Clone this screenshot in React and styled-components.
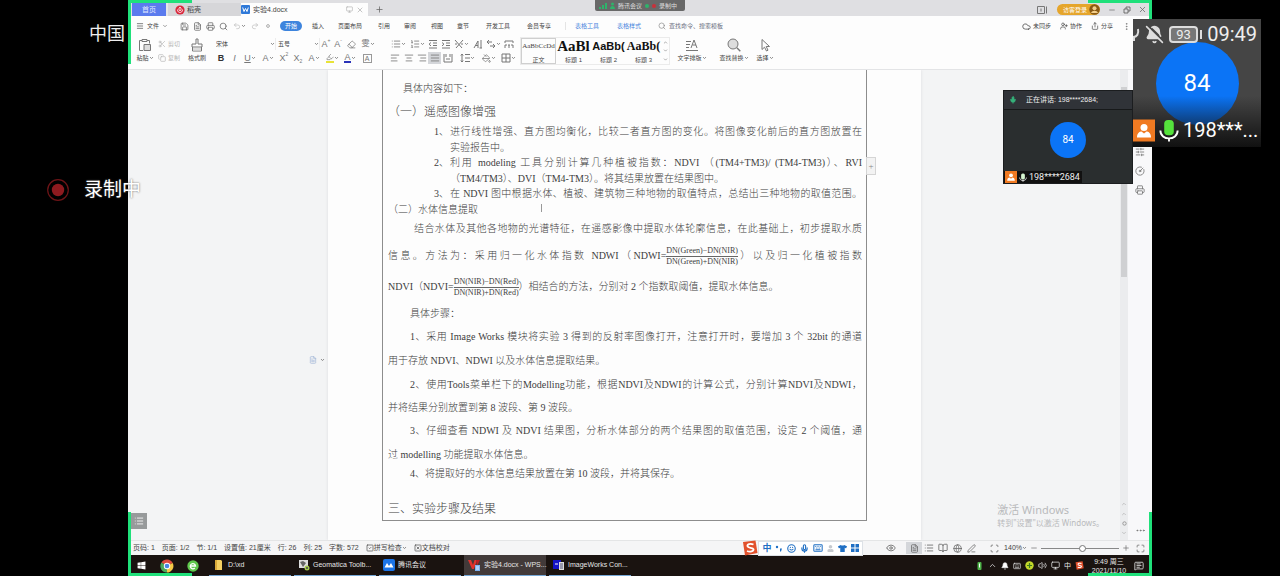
import { useState } from "react";
import styled, { createGlobalStyle, css } from "styled-components";
import {
  AlignCenter,
  AlignJustify,
  AlignLeft,
  AlignRight,
  Bell,
  BellOff,
  BookOpen,
  ChevronDown,
  ChevronUp,
  CircleGauge,
  Cloud,
  Copy,
  Ellipsis,
  EllipsisVertical,
  Eraser,
  Eye,
  FileText,
  Globe,
  Highlighter,
  Keyboard,
  List,
  ListOrdered,
  Maximize,
  Menu,
  MessageSquareText,
  Mic,
  Minus,
  Monitor,
  PaintBucket,
  PenLine,
  Plus,
  Printer,
  Redo2,
  Save,
  Scan,
  Scissors,
  Search,
  Share,
  SlidersHorizontal,
  Smile,
  SquareCheck,
  SquareX,
  Undo2,
  UserPlus,
  Volume2,
  X,
} from "lucide-react";
import { FaUser, FaTshirt, FaWindows } from "react-icons/fa";

const FILE_TOOLS = [
  { id: "save", icon: Save },
  { id: "export", icon: FileText },
  { id: "print", icon: Printer },
  { id: "preview", icon: Search },
];

const MENUS = [
  { text: "插入", w: 20 },
  { text: "页面布局", w: 44 },
  { text: "引用", w: 24 },
  { text: "审阅", w: 28 },
  { text: "视图", w: 26 },
  { text: "章节", w: 26 },
  { text: "开发工具", w: 44 },
  { text: "会员专享", w: 38 },
];

const STYLES = [
  { sample: "AaBbCcDd", name: "正文", size: 7, on: true },
  { sample: "AaBl", name: "标题 1", size: 15, bold: true },
  { sample: "AaBb(", name: "标题 2", size: 11, bold: true, sans: true },
  { sample: "AaBb(", name: "标题 3", size: 12, bold: true },
];

const TASKS = [
  { text: "D:\\xd", icon: "folder" },
  { text: "Geomatica Toolb...", icon: "geo" },
  { text: "腾讯会议", icon: "meeting" },
  { text: "实验4.docx - WPS...", icon: "wps", on: true },
  { text: "ImageWorks Con...", icon: "image" },
];

const Caret = () => (
  <svg width="5" height="4" viewBox="0 0 5 4">
    <path d="M1 1l1.5 1.6L4 1" fill="none" stroke="#777" strokeWidth="0.8" />
  </svg>
);

const PasteIcon = () => (
  <svg width="14" height="14" viewBox="0 0 14 14" fill="none" stroke="#777">
    <path d="M4 2.5H1.5v10H5M9 2.5h2.500v3M4 1.500h5v2H4z" />
    <path d="M6 6.500h6.500v6H6z" fill="#ddd" />
  </svg>
);

const BrushIcon = () => (
  <svg width="14" height="14" viewBox="0 0 14 14" fill="none" stroke="#777">
    <path d="M6 1h2v5h4v3H2V6h4zM2.500 9v4h9V9" />
    <path d="M3 10h8v2.500H3z" fill="#ddd" stroke="none" />
  </svg>
);

const TypesetIcon = () => (
  <svg width="14" height="14" viewBox="0 0 14 14" fill="none" stroke="#777">
    <path d="M1 3.500h5M1 6.500h4M1 9.500h3M1 12.500h12M6 10l3-8 3 8M7.500 7h3.500" />
  </svg>
);

const CursorIcon = () => (
  <svg width="14" height="14" viewBox="0 0 14 14" fill="none" stroke="#777">
    <path d="M4 1.500v10l2.500-2.300 2 3.800 1.500-.8-1.800-3.700h3.300z" />
  </svg>
);

const FindIcon = () => (
  <svg width="14" height="14" viewBox="0 0 14 14" fill="#ddd" stroke="#777">
    <circle cx="6" cy="6" r="5" />
    <path d="M9.800 9.800l3.500 3.500" strokeWidth="1.400" />
  </svg>
);

const IndentIcon = ({ flip }) => (
  <svg width="10" height="10" viewBox="0 0 10 10" fill="none" stroke="#777">
    <path d="M1 1.500h8M5 4h4M5 6.500h4M1 9h8" />
    <path d={flip ? "M1 3.500l2 1.700-2 1.700" : "M3 3.500L1 5.200l2 1.700"} />
  </svg>
);

const AsianIcon = () => (
  <svg width="10" height="10" viewBox="0 0 10 10" fill="none" stroke="#777">
    <path d="M1 1l7 8M9 1L2 9M1 5h2M7 5h2" />
  </svg>
);

const SortIcon = () => (
  <svg width="10" height="10" viewBox="0 0 10 10" fill="none" stroke="#777">
    <path d="M1 9l4-7v7M2.500 6.500H5M8 1v8M6.500 9H9" />
  </svg>
);

const WrapIcon = () => (
  <svg width="10" height="10" viewBox="0 0 10 10" fill="none" stroke="#777">
    <path d="M1 3h5M3 1L1 3l2 2M4 7h5M7 5l2 2-2 2" />
  </svg>
);

const RulerIcon = () => (
  <svg width="10" height="10" viewBox="0 0 10 10" fill="none" stroke="#777">
    <path d="M1 2h8M1 2v2M9 2v2M1 6h2M4 6h2M7 6h2M1 9V6M5 9V6M9 9V6" />
  </svg>
);

const SpreadIcon = () => (
  <svg width="10" height="10" viewBox="0 0 10 10" fill="none" stroke="#777">
    <path d="M1 1v8h8V1M3 1v3M7 1v3M3 6h4" />
  </svg>
);

const SpacingIcon = () => (
  <svg width="10" height="10" viewBox="0 0 10 10" fill="none" stroke="#777">
    <path d="M2 1v8M.8 2.500L2 1l1.200 1.500M.8 7.500L2 9l1.200-1.500M5 1.500h5M5 5h5M5 8.500h5" />
  </svg>
);

const TableIcon = () => (
  <svg width="10" height="10" viewBox="0 0 10 10" fill="none" stroke="#777">
    <path d="M1 1h8v8H1zM5 1v8M1 5h8" />
  </svg>
);

const RestoreIcon = () => (
  <svg width="8" height="8" viewBox="0 0 8 8" fill="none" stroke="#555" strokeWidth="0.8">
    <path d="M1 3h4v4H1zM3 3V1h4v4H5" />
  </svg>
);

const SogouIcon = ({ size }) => (
  <svg width={size} height={size} viewBox="0 0 16 16">
    <path d="M1 2l12.500-1.500 2 12.500L3 15.500z" fill="#e2512c" />
    <path d="M11.500 4.500C8 3 5 4.300 5.500 6.300c.5 2 5.500 1 6 3 .4 2-3.500 3-6.500 1.700" fill="none" stroke="#fff" strokeWidth="1.800" />
  </svg>
);

const DocIcon = () => (
  <svg width="9" height="9" viewBox="0 0 9 9">
    <rect width="9" height="9" rx="1" fill="#2f79d8" />
    <path d="M1.700 2.500L3 6.500l1.500-3 1.500 3 1.300-4" fill="none" stroke="#fff" />
  </svg>
);

const ShellIcon = () => (
  <svg width="10" height="10" viewBox="0 0 10 10">
    <circle cx="5" cy="5" r="4.600" fill="#d9283c" />
    <path d="M5 2c1.500 1.500 1.500 2.500 0 4C3.500 4.500 3.500 3.500 5 2zM2.500 4.500C2.500 7 4 7.500 5 7.500s2.500-.5 2.500-3" fill="none" stroke="#fff" strokeWidth="0.800" />
  </svg>
);

const ChromeIcon = () => (
  <svg width="14" height="14" viewBox="0 0 14 14">
    <path d="M7 7L1.400 3.500A6.500 6.500 0 0 1 12.700 4z" fill="#dd4b3e" />
    <path d="M7 7l5.700-3A6.500 6.500 0 0 1 7 13.500z" fill="#f6c945" />
    <path d="M7 7v6.500A6.500 6.500 0 0 1 1.400 3.500z" fill="#4ba85a" />
    <circle cx="7" cy="7" r="3.200" fill="#fff" />
    <circle cx="7" cy="7" r="2.300" fill="#4a86e0" />
  </svg>
);

const GreenBrowserIcon = () => (
  <svg width="12" height="12" viewBox="0 0 12 12">
    <circle cx="6" cy="6" r="5.700" fill="#5fc84c" />
    <path d="M3.500 6h5A2.600 2.600 0 1 0 7.800 8" fill="none" stroke="#fff" strokeWidth="1.300" />
  </svg>
);

const TaskIcon = ({ kind }) => {
  if (kind === "folder") {
    return (
      <svg width="12" height="12" viewBox="0 0 12 12">
        <path d="M2 1h6l1 1v9H2z" fill="#f4cf62" />
        <path d="M2 1h2v10H2z" fill="#d9a93a" />
      </svg>
    );
  }
  if (kind === "geo") {
    return (
      <svg width="12" height="12" viewBox="0 0 12 12">
        <path d="M1 1h9v8H1z" fill="#ddd" />
        <path d="M2 3l3-1 3 2-3 4z" fill="#666" />
        <circle cx="9" cy="9" r="2.500" fill="#a4c84c" />
        <circle cx="9" cy="9" r="1" fill="#445" />
      </svg>
    );
  }
  if (kind === "meeting") {
    return (
      <svg width="12" height="12" viewBox="0 0 12 12">
        <rect width="12" height="12" rx="2" fill="#1b74e8" />
        <path d="M1.500 8.500L4 4l2 3 2-3 2.500 4.500z" fill="#fff" />
      </svg>
    );
  }
  if (kind === "wps") {
    return (
      <svg width="13" height="12" viewBox="0 0 13 12">
        <path d="M0 1h3l2 5 1.500-5H9l-3 9H4z" fill="#e0322d" />
        <path d="M8 1h4L9 7z" fill="#b81f24" />
        <path d="M7 6h5v6H7z" fill="#7db2f2" />
        <path d="M8 8h3M8 10h3" stroke="#fff" strokeWidth="0.800" />
      </svg>
    );
  }
  return (
    <svg width="12" height="12" viewBox="0 0 12 12">
      <path d="M0 1h8v9H0z" fill="#1414c8" />
      <path d="M2 5h3" stroke="#fff" />
      <path d="M6 3h5v8H6z" fill="#ddd" />
      <path d="M7 5h3M7 7h3M7 9h3" stroke="#336" strokeWidth="0.800" />
    </svg>
  );
};

const TitleBar = () => (
  <Tabs>
    <Tab $w={34} $kind="home">首页</Tab>
    <Tab $w={75} $kind="idle">
      <ShellIcon />
      稻壳
    </Tab>
    <Tab $w={127} $kind="open">
      <DocIcon />
      <span>实验4.docx</span>
      <Monitor size={7} color="#aaa" />
      <X size={8} color="#aaa" />
    </Tab>
    <IconButton $w={22} aria-label="new tab">
      <Plus size={9} />
    </IconButton>
    <WindowTools>
      <svg width="11" height="8" viewBox="0 0 11 8" fill="none" stroke="#777">
        <path d="M.5.500h7v7h-7zM9.500.500v7M4 2.500v3" />
      </svg>
      <Guest>
        访客登录
        <svg width="11" height="11" viewBox="0 0 11 11">
          <circle cx="5.500" cy="5.500" r="5.200" fill="#8a5a14" />
          <circle cx="5.500" cy="4.300" r="2" fill="#f4cf8a" />
          <path d="M2 9c1-3 6-3 7 0" fill="#f4cf8a" />
        </svg>
      </Guest>
      <IconButton $w={14} aria-label="minimize">
        <Minus size={8} />
      </IconButton>
      <IconButton $w={14} aria-label="restore">
        <RestoreIcon />
      </IconButton>
      <IconButton $w={14} aria-label="close">
        <X size={9} />
      </IconButton>
    </WindowTools>
  </Tabs>
);

const MenuBar = () => (
  <MenuRow>
    <FileButton>
      <Menu size={8} />
      文件
      <ChevronDown size={6} />
    </FileButton>
    {FILE_TOOLS.map(({ id, icon: Icon }) => (
      <IconButton key={id} $w={13} aria-label={id}>
        <Icon size={9} strokeWidth={2} />
      </IconButton>
    ))}
    <IconButton $w={18} $dim aria-label="undo">
      <Undo2 size={8} />
      <Caret />
    </IconButton>
    <IconButton $w={14} $dim aria-label="redo">
      <Redo2 size={8} />
    </IconButton>
    <IconButton $w={12} $dim aria-label="more">
      <svg width="4" height="4" viewBox="0 0 4 4">
        <circle cx="2" cy="2" r="1.400" fill="none" stroke="#999" strokeWidth="0.800" />
      </svg>
    </IconButton>
    <MenuItem $w={34} $on>
      <span>开始</span>
    </MenuItem>
    {MENUS.map((menu) => (
      <MenuItem key={menu.text} $w={menu.w}>
        {menu.text}
      </MenuItem>
    ))}
    <Divider />
    <MenuItem $w={30} $link>表格工具</MenuItem>
    <MenuItem $w={54} $link>表格样式</MenuItem>
    <SearchBox>
      <Search size={8} color="#888" />
      <input type="text" name="command" aria-label="search" placeholder="查找命令、搜索模板" />
    </SearchBox>
    <ShareTools>
      <button>
        <Cloud size={9} />
        未同步
      </button>
      <button>
        <UserPlus size={8} />
        协作
      </button>
      <button>
        <Share size={8} />
        分享
      </button>
      <EllipsisVertical size={9} color="#777" />
    </ShareTools>
  </MenuRow>
);

const Ribbon = () => (
  <RibbonRow>
    <BigTool $w={26}>
      <PasteIcon />
      <span>
        粘贴
        <Caret />
      </span>
    </BigTool>
    <SmallTools>
      <button>
        <Scissors size={8} />
        剪切
      </button>
      <button>
        <Copy size={8} />
        复制
      </button>
    </SmallTools>
    <BigTool $w={26}>
      <BrushIcon />
      <span>格式刷</span>
    </BigTool>
    <ToolGroup $w={170}>
      <div>
        <Picker $w={62}>
          <select aria-label="font">
            <option>宋体</option>
          </select>
          <Caret />
        </Picker>
        <Picker $w={44}>
          <select aria-label="size">
            <option>五号</option>
          </select>
          <Caret />
        </Picker>
        <Tool $w={12}>A<sup>+</sup></Tool>
        <Tool $w={12}>A<sup>-</sup></Tool>
        <Tool $w={14} aria-label="clear"><Eraser size={9} /></Tool>
        <Tool $w={20}>
          <small>雯</small>
          <Caret />
        </Tool>
      </div>
      <div>
        <Tool $w={14} $strong>B</Tool>
        <Tool $w={13}><i>I</i></Tool>
        <Tool $w={18}><u>U</u><Caret /></Tool>
        <Tool $w={18}>A<Caret /></Tool>
        <Tool $w={14}>X<sup>2</sup></Tool>
        <Tool $w={14}>X<sub>2</sub></Tool>
        <Tool $w={18}>A<Caret /></Tool>
        <Tool $w={18} $under="#e8e337" aria-label="highlight">
          <b><Highlighter size={8} /></b>
          <Caret />
        </Tool>
        <Tool $w={18} $under="#2a33b8"><b>A</b><Caret /></Tool>
        <Tool $w={16}><em>A</em></Tool>
      </div>
    </ToolGroup>
    <ToolGroup $w={134}>
      <div>
        <Tool $w={20} aria-label="bullets"><List size={10} /><Caret /></Tool>
        <Tool $w={18} aria-label="numbers"><ListOrdered size={10} /><Caret /></Tool>
        <Tool $w={13} aria-label="outdent"><IndentIcon /></Tool>
        <Tool $w={13} aria-label="indent"><IndentIcon flip /></Tool>
        <Tool $w={19} aria-label="asian layout"><AsianIcon /><Caret /></Tool>
        <Tool $w={13} aria-label="sort"><SortIcon /></Tool>
        <Tool $w={18} aria-label="direction"><WrapIcon /><Caret /></Tool>
        <Tool $w={14} aria-label="ruler"><RulerIcon /></Tool>
      </div>
      <div>
        <Tool $w={14} aria-label="left"><AlignLeft size={10} /></Tool>
        <Tool $w={13} aria-label="center"><AlignCenter size={10} /></Tool>
        <Tool $w={13} aria-label="right"><AlignRight size={10} /></Tool>
        <Tool $w={13} $on aria-label="justify"><AlignJustify size={10} /></Tool>
        <Tool $w={14} aria-label="distribute"><SpreadIcon /></Tool>
        <Tool $w={24} aria-label="spacing"><SpacingIcon /><Caret /></Tool>
        <Tool $w={20} aria-label="fill"><PaintBucket size={9} /><Caret /></Tool>
        <Tool $w={18} aria-label="borders"><TableIcon /><Caret /></Tool>
      </div>
    </ToolGroup>
    <StyleList>
      {STYLES.map((style) => (
        <StyleCell key={style.name} $on={style.on} $size={style.size} $bold={style.bold} $sans={style.sans}>
          <span>{style.sample}</span>
          {style.name}
        </StyleCell>
      ))}
      <StyleScroll>
        <ChevronUp size={5} />
        <ChevronDown size={5} />
        <ChevronDown size={5} />
      </StyleScroll>
    </StyleList>
    <BigTool $w={44}>
      <TypesetIcon />
      <span>
        文字排版
        <Caret />
      </span>
    </BigTool>
    <BigTool $w={40}>
      <FindIcon />
      <span>
        查找替换
        <Caret />
      </span>
    </BigTool>
    <BigTool $w={22}>
      <CursorIcon />
      <span>
        选择
        <Caret />
      </span>
    </BigTool>
  </RibbonRow>
);

const Fraction = ({ top, bottom }) => (
  <Frac>
    <span>{top}</span>
    <span>{bottom}</span>
  </Frac>
);

const Document = () => (
  <Paper>
    <Sheet>
      <Line $h={22} $indent={15}>具体内容如下：</Line>
      <Line $h={24} $big>（一）遥感图像增强</Line>
      <ListLine $h={16} $full>
        <span>1、</span>
        <p>进行线性增强、直方图均衡化，比较二者直方图的变化。将图像变化前后的直方图放置在</p>
      </ListLine>
      <ListLine $h={15}>
        <span />
        <p>实验报告中。</p>
      </ListLine>
      <ListLine $h={16} $full>
        <span>2、</span>
        <p>利用 modeling 工具分别计算几种植被指数：NDVI （(TM4+TM3)/ (TM4-TM3)）、RVI</p>
      </ListLine>
      <ListLine $h={15}>
        <span />
        <p>（TM4/TM3）、DVI（TM4-TM3）。将其结果放置在结果图中。</p>
      </ListLine>
      <ListLine $h={16} $full>
        <span>3、</span>
        <p>在 NDVI 图中根据水体、植被、建筑物三种地物的取值特点，总结出三种地物的取值范围。</p>
      </ListLine>
      <Line $h={15}>（二）水体信息提取</Line>
      <Line $h={24} $indent={26} $full>
        结合水体及其他各地物的光谱特征，在遥感影像中提取水体轮廓信息，在此基础上，初步提取水质
      </Line>
      <Line $h={30} $full>
        信息。方法为：采用归一化水体指数 NDWI（NDWI=
        <Fraction top="DN(Green)−DN(NIR)" bottom="DN(Green)+DN(NIR)" />
        ）以及归一化植被指数
      </Line>
      <Line $h={32}>
        NDVI（NDVI=
        <Fraction top="DN(NIR)−DN(Red)" bottom="DN(NIR)+DN(Red)" />
        ）相结合的方法，分别对 2 个指数取阈值，提取水体信息。
      </Line>
      <Line $h={22} $indent={22}>具体步骤：</Line>
      <Line $h={24} $indent={22} $full>
        1、采用 Image Works 模块将实验 3 得到的反射率图像打开，注意打开时，要增加 3 个 32bit 的通道
      </Line>
      <Line $h={24}>用于存放 NDVI、NDWI 以及水体信息提取结果。</Line>
      <Line $h={23} $indent={22} $full>
        2、使用Tools菜单栏下的Modelling功能，根据NDVI及NDWI的计算公式，分别计算NDVI及NDWI，
      </Line>
      <Line $h={23}>并将结果分别放置到第 8 波段、第 9 波段。</Line>
      <Line $h={24} $indent={22} $full>
        3、仔细查看 NDWI 及 NDVI 结果图，分析水体部分的两个结果图的取值范围，设定 2 个阈值，通
      </Line>
      <Line $h={23}>过 modelling 功能提取水体信息。</Line>
      <Line $h={16} $indent={22}>4、将提取好的水体信息结果放置在第 10 波段，并将其保存。</Line>
      <SectionLine $h={22} $big>三、实验步骤及结果</SectionLine>
      <AddColumn aria-label="add column">+</AddColumn>
      <TextCursor />
    </Sheet>
  </Paper>
);

const StatusBar = () => {
  const [zoom, setZoom] = useState(53);

  return (
    <Status>
      <StatusText>页码: 1</StatusText>
      <StatusText>页面: 1/2</StatusText>
      <StatusText>节: 1/1</StatusText>
      <StatusText>设置值: 21厘米</StatusText>
      <StatusText>行: 26</StatusText>
      <StatusText>列: 25</StatusText>
      <StatusText>字数: 572</StatusText>
      <StatusText>
        <SquareCheck size={8} />
        拼写检查
        <Caret />
      </StatusText>
      <StatusText>
        <SquareX size={8} />
        文档校对
      </StatusText>
      <ViewTools>
        <IconButton $w={30} aria-label="eye care"><Eye size={10} /></IconButton>
        <IconButton $w={16} $on aria-label="page view"><FileText size={9} /></IconButton>
        <IconButton $w={14} aria-label="outline"><List size={10} /></IconButton>
        <IconButton $w={14} aria-label="reading"><BookOpen size={10} /></IconButton>
        <IconButton $w={14} aria-label="web"><Globe size={9} /></IconButton>
        <IconButton $w={14} aria-label="write"><PenLine size={9} /></IconButton>
        <ZoomTools>
          <IconButton $w={20} aria-label="fit"><Scan size={9} /></IconButton>
          <span>140%</span>
          <Caret />
          <IconButton $w={14} aria-label="zoom out"><Minus size={8} /></IconButton>
          <ZoomSlider
            type="range"
            aria-label="zoom"
            value={zoom}
            onChange={(e) => setZoom(e.target.value)}
          />
          <IconButton $w={14} aria-label="zoom in"><Plus size={8} /></IconButton>
          <IconButton $w={14} aria-label="full screen"><Maximize size={9} /></IconButton>
        </ZoomTools>
      </ViewTools>
      <ImeBar>
        <SogouIcon size={16} />
        <div>
          <b>中</b>
          <svg width="8" height="8" viewBox="0 0 8 8" fill="#1f6fc4">
            <circle cx="2" cy="3" r="1.200" />
            <path d="M5 4.500h2L6 7.500H5z" />
          </svg>
          <Smile size={9} strokeWidth={3} />
          <Mic size={9} strokeWidth={3} />
          <Keyboard size={10} strokeWidth={2.5} />
          <FaUser size={7} color="#c5c9ce" />
          <FaTshirt size={9} />
          <svg width="8" height="8" viewBox="0 0 8 8" fill="#1f6fc4">
            <path d="M0 0h3.500v3.500H0zM4.500 0H8v3.500H4.500zM0 4.500h3.500V8H0zM4.500 4.500H8V8H4.500z" />
          </svg>
        </div>
      </ImeBar>
    </Status>
  );
};

const Taskbar = () => (
  <Tasks>
    <Launch aria-label="start"><FaWindows size={9} color="#fff" /></Launch>
    <Launch aria-label="chrome"><ChromeIcon /></Launch>
    <Launch aria-label="browser"><GreenBrowserIcon /></Launch>
    {TASKS.map((task) => (
      <Task key={task.text} $on={task.on}>
        <TaskIcon kind={task.icon} />
        {task.text}
      </Task>
    ))}
    <Tray>
      <svg width="9" height="9" viewBox="0 0 9 9">
        <rect x="2.500" y="1" width="4" height="8" rx="1" fill="#4fb54a" />
        <path d="M4.500 2.500v4" stroke="#fff" />
      </svg>
      <ChevronUp size={9} />
      <Bell size={8} fill="#fff" />
      <Keyboard size={8} />
      <svg width="9" height="9" viewBox="0 0 9 9">
        <circle cx="4.500" cy="4.500" r="4.200" fill="#c3d82c" />
        <path d="M4.500 2v5M2 4.500h5" stroke="#3d7a1c" strokeWidth="1.200" />
      </svg>
      <Volume2 size={9} />
      <Monitor size={9} />
      <span>中</span>
      <SogouIcon size={9} />
      <Clock>
        <span>9:49 周三</span>
        <span>2021/11/10</span>
      </Clock>
      <MessageSquareText size={10} />
    </Tray>
  </Tasks>
);

const Person = () => (
  <svg viewBox="0 0 22 22">
    <rect width="22" height="22" fill="#f07a22" />
    <circle cx="11" cy="8" r="3.500" fill="#fff" />
    <path d="M4 18c0-5 3-6 4.500-6L11 14l2.500-2c1.500 0 4.500 1 4.500 6z" fill="#fff" />
  </svg>
);

const LiveMic = ({ fill }) => (
  <svg viewBox="0 0 20 24">
    <rect x="5" y="1" width="10" height="16" rx="4" fill={fill} />
    <path d="M1 12c0 11 18 11 18 0M10 20v3.500" fill="none" stroke="#fff" strokeWidth="2" />
  </svg>
);

const App = () => (
  <Stage>
    <GlobalStyle />
    <Carrier>中国</Carrier>
    <Recording>
      <svg width="22" height="22" viewBox="0 0 22 22">
        <circle cx="11" cy="11" r="10.300" fill="none" stroke="#6e1417" strokeWidth="1.200" />
        <circle cx="11" cy="11" r="6.200" fill="#8e1a1f" />
      </svg>
      录制中
    </Recording>
    <Screen>
      <TitleBar />
      <MenuBar />
      <Ribbon />
      <Workspace>
        <Gutter>
          <Outline aria-label="outline">
            <List size={10} />
          </Outline>
          <PageMark>
            <FileText size={8} />
            <Caret />
          </PageMark>
        </Gutter>
        <Document />
        <RightGutter>
          <Watermark>
            <p>激活 Windows</p>
            <small>转到"设置"以激活 Windows。</small>
          </Watermark>
        </RightGutter>
        <Scroll>
          <i />
          <div>
            <ChevronUp size={6} />
            <ChevronUp size={6} />
            <svg width="5" height="5" viewBox="0 0 5 5">
              <circle cx="2.500" cy="2.500" r="1.700" fill="none" stroke="#999" />
            </svg>
            <ChevronDown size={6} />
          </div>
        </Scroll>
        <SidePane>
          <SlidersHorizontal size={10} />
          <CircleGauge size={10} />
          <Printer size={10} />
          <Ellipsis size={11} />
        </SidePane>
      </Workspace>
      <StatusBar />
      <Taskbar />
      <Corner $top $left />
      <Corner $top />
      <Corner $left />
      <Corner />
      <MeetingPill>
        <svg width="8" height="7" viewBox="0 0 8 7" fill="#2fb36b">
          <path d="M0 5h2v2H0zM3 3h2v4H3zM6 1h2v6H6z" />
        </svg>
        <svg width="5" height="7" viewBox="0 0 5 7" fill="#2fb36b">
          <circle cx="2.500" cy="2" r="1.500" />
          <path d="M0 7c0-4 5-4 5 0z" />
        </svg>
        腾讯会议
        <Dot $color="#2fb36b" />
        <Dot $color="#c9303a" />
        录制中
      </MeetingPill>
      <Speaker>
        <header>
          <Mic size={8} color="#35b07a" fill="#35b07a" />
          正在讲话: 198****2684;
        </header>
        <div>
          <Avatar $size={36} $font={10}>84</Avatar>
        </div>
        <footer>
          <Person />
          <LiveMic fill="#d5f5d0" />
          198****2684
        </footer>
      </Speaker>
    </Screen>
    <Floating>
      <PhoneStatus>
        <svg width="7" height="18" viewBox="0 0 7 18" fill="none" stroke="#ddd" strokeWidth="2">
          <path d="M5 4c1 5-1 8-5 8M1 12v4" />
        </svg>
        <BellOff size={19} fill="#ddd" color="#ddd" />
        <Battery>93</Battery>
        <span>09:49</span>
      </PhoneStatus>
      <Avatar $size={83} $font={24}>84</Avatar>
      <Caller>
        <Person />
        <LiveMic fill="#55e23c" />
        198***...
      </Caller>
    </Floating>
  </Stage>
);

export default App;

const GlobalStyle = createGlobalStyle`
  * {
    box-sizing: border-box;
  }

  body {
    margin: 0;
    background-color: #000;
    font-family: "Liberation Sans", "Noto Sans CJK SC", sans-serif;
  }

  p {
    margin: 0;
  }

  svg {
    flex-shrink: 0;
  }

  button, input, select {
    margin: 0;
    padding: 0;
    border: none;
    background: none;
    color: inherit;
    font: inherit;
  }
`;

const row = css`
  display: flex;
  align-items: center;
`;

const Stage = styled.div`
  position: relative;
  min-height: 100vh;
  padding: 0 10%;
  display: flex;
  background-color: #000;
`;

const Screen = styled.main`
  position: relative;
  flex: 1;
  min-width: 0;
  display: flex;
  flex-direction: column;
  background-color: #fdfdfd;
  color: #444;
  font-size: 6px;
  line-height: 10px;
  white-space: nowrap;
`;

const Tabs = styled.div`
  ${row}
  align-items: stretch;
  height: 16px;
  padding: 3px 3px 0 4px;
  background-color: #dfdfe2;
`;

const Tab = styled.button`
  ${row}
  width: ${(props) => props.$w}px;
  padding: 0 4px;
  gap: 2px;
  font-size: 7px;

  ${(props) => props.$kind === "home" && css`
    justify-content: center;
    background-color: #5b7bee;
    color: #e5eaff;
  `}

  ${(props) => props.$kind === "idle" && css`
    padding-left: 7px;
    border-left: 2px solid #e6e6e8;
    background-color: #d6d6d9;
  `}

  ${(props) => props.$kind === "open" && css`
    padding-left: 0;
    background-color: #fdfdfd;
    gap: 3px;

    span {
      flex: 1;
      text-align: left;
    }
  `}
`;

const IconButton = styled.button`
  ${row}
  justify-content: center;
  width: ${(props) => props.$w}px;
  color: ${(props) => (props.$dim ? "#bbb" : "#666")};
  background-color: ${(props) => (props.$on ? "#d4d6da" : "transparent")};
`;

const WindowTools = styled.div`
  ${row}
  margin-left: auto;
  gap: 1px;
`;

const Guest = styled.button`
  ${row}
  justify-content: flex-end;
  width: 43px;
  height: 11px;
  margin: 0 4px 0 8px;
  gap: 2px;
  border-radius: 6px;
  background-color: #e5a52b;
  color: #fff;
`;

const MenuRow = styled.div`
  ${row}
  height: 20px;
  padding: 0 3px 0 4px;
`;

const FileButton = styled.button`
  ${row}
  width: 46px;
  padding-left: 4px;
  gap: 3px;
`;

const MenuItem = styled.button`
  ${row}
  justify-content: center;
  width: ${(props) => props.$w}px;
  color: ${(props) => (props.$link ? "#3f7fdc" : "#444")};

  ${(props) => props.$on && css`
    span {
      padding: 0 5px;
      border-radius: 5px;
      background-color: #3d84dd;
      color: #fff;
    }
  `}
`;

const Divider = styled.i`
  width: 1px;
  height: 8px;
  margin: 0 6px 0 7px;
  background-color: #e4e4e4;
`;

const SearchBox = styled.label`
  ${row}
  gap: 3px;
  padding-left: 2px;

  input {
    width: 80px;
    height: 10px;
    outline: none;
  }

  input::placeholder {
    color: #6a6f80;
    opacity: 1;
  }
`;

const ShareTools = styled.div`
  ${row}
  margin-left: auto;
  margin-right: 18px;
  gap: 9px;

  button {
    ${row}
    gap: 2px;
  }
`;

const RibbonRow = styled.div`
  display: flex;
  height: 34px;
  padding: 1px 4px 0;
  border-bottom: 1px solid #e3e4e6;
`;

const BigTool = styled.button`
  display: flex;
  flex-direction: column;
  align-items: center;
  width: ${(props) => props.$w}px;
  padding-top: 1px;
  gap: 1px;

  span {
    ${row}
    height: 10px;
  }
`;

const SmallTools = styled.div`
  width: 26px;
  color: #b5b5b5;

  button {
    ${row}
    height: 14px;
    gap: 2px;
  }
`;

const ToolGroup = styled.div`
  width: ${(props) => props.$w}px;
  margin-left: 4px;

  & > div {
    ${row}
    height: 14px;
  }
`;

const Picker = styled.div`
  ${row}
  width: ${(props) => props.$w}px;
  height: 12px;
  padding-left: 2px;
  border-right: 1px solid #ececec;

  select {
    flex: 1;
    appearance: none;
    outline: none;
  }
`;

const Tool = styled.button`
  ${row}
  justify-content: center;
  width: ${(props) => props.$w}px;
  height: 12px;
  color: #777;
  font-size: 9px;
  background-color: ${(props) => (props.$on ? "#d4d6da" : "transparent")};

  ${(props) => props.$strong && css`
    font-weight: bold;
    color: #333;
  `}

  sup, sub {
    font-size: 5px;
    line-height: 5px;
  }

  sup {
    align-self: flex-start;
  }

  sub {
    align-self: flex-end;
  }

  small {
    font-size: 8px;
  }

  b {
    display: flex;
    font-weight: normal;
    line-height: 8px;
    border-bottom: 2px solid ${(props) => props.$under};
  }

  em {
    width: 9px;
    border: 1px solid #999;
    font-size: 7px;
    font-style: normal;
    line-height: 7px;
  }
`;

const StyleList = styled.div`
  display: flex;
  width: 150px;
  height: 28px;
  margin-left: -2px;
  border: 1px solid #ebebeb;
`;

const StyleCell = styled.button`
  display: flex;
  flex-direction: column;
  align-items: center;
  width: 35px;
  box-shadow: inset 0 0 0 1px ${(props) => (props.$on ? "#cfcfcf" : "transparent")};

  span {
    height: 17px;
    color: ${(props) => (props.$bold ? "#111" : "#444")};
    font-family: ${(props) => (props.$sans ? '"Liberation Sans"' : '"Liberation Serif"')}, serif;
    font-size: ${(props) => props.$size}px;
    font-weight: ${(props) => (props.$bold ? "bold" : "normal")};
    line-height: 17px;
  }
`;

const StyleScroll = styled.div`
  display: flex;
  flex-direction: column;
  justify-content: space-around;
  align-items: center;
  width: 8px;
`;

const Workspace = styled.div`
  flex: 1;
  display: flex;
  background-color: #f3f4f5;
`;

const Gutter = styled.aside`
  position: relative;
  flex: 0 0 200px;
`;

const Outline = styled.button`
  ${row}
  justify-content: center;
  position: absolute;
  left: 3px;
  bottom: 11px;
  width: 16px;
  height: 16px;
  background-color: #979a9b;
  color: #fff;
`;

const PageMark = styled.div`
  ${row}
  position: absolute;
  right: 3px;
  top: 286px;
  gap: 3px;
  color: #9fb4d6;
`;

const Paper = styled.div`
  flex: 0 1 593px;
  min-width: 0;
  padding: 0 54px;
  background-color: #fdfdfd;
  box-shadow: 0 0 3px #dcdde0;
  clip-path: inset(0 -4px);
`;

const Sheet = styled.article`
  position: relative;
  padding: 8px 4px 0 5px;
  border: solid #8d8d8d;
  border-width: 0 1px 1px;
  color: #3d3d3d;
  font-family: "Liberation Serif", "Noto Sans CJK SC", serif;
  font-size: 10px;
  font-weight: 300;
`;

const Line = styled.p`
  height: ${(props) => props.$h}px;
  padding-left: ${(props) => props.$indent || 0}px;
  line-height: ${(props) => props.$h}px;
  font-size: ${(props) => (props.$big ? 12 : 10)}px;
  text-align-last: ${(props) => (props.$full ? "justify" : "left")};
`;

const SectionLine = styled(Line)`
  margin-top: 16px;
`;

const ListLine = styled.div`
  display: flex;
  height: ${(props) => props.$h}px;
  padding-left: 46px;
  line-height: ${(props) => props.$h}px;

  span {
    width: 16px;
  }

  p {
    flex: 1;
    text-align-last: ${(props) => (props.$full ? "justify" : "left")};
  }
`;

const Frac = styled.span`
  display: inline-flex;
  flex-direction: column;
  vertical-align: middle;
  font-size: 8px;
  line-height: 10px;
  text-align-last: center;

  span + span {
    border-top: 1px solid #666;
  }
`;

const AddColumn = styled.button`
  position: absolute;
  left: 100%;
  top: 87px;
  width: 10px;
  height: 18px;
  border: 1px solid #d5d5d5;
  background-color: #f3f3f3;
  color: #888;
  font-size: 9px;
`;

const TextCursor = styled.i`
  position: absolute;
  left: 158px;
  top: 134px;
  width: 1px;
  height: 8px;
  background-color: #999;
`;

const RightGutter = styled.div`
  position: relative;
  flex: 1;
`;

const Watermark = styled.div`
  position: absolute;
  right: 16px;
  bottom: 11px;
  color: #b9babc;
  font-family: "Noto Sans", "Noto Sans CJK SC", sans-serif;
  font-size: 11px;
  line-height: 14px;

  small {
    display: block;
    font-size: 8px;
    line-height: 12px;
  }
`;

const Scroll = styled.div`
  display: flex;
  flex-direction: column;
  justify-content: space-between;
  width: 8px;
  background-color: #ebecee;
  color: #999;

  i {
    height: 190px;
    margin: 17px 1px 0;
    background-color: #cfd0d2;
  }

  div {
    display: flex;
    flex-direction: column;
    align-items: center;
    gap: 4px;
    padding-bottom: 4px;
  }
`;

const SidePane = styled.aside`
  display: flex;
  flex-direction: column;
  align-items: center;
  width: 24px;
  padding: 77px 0 4px;
  gap: 9px;
  background-color: #f8f8fa;
  color: #777;

  svg:last-child {
    margin-top: auto;
  }
`;

const Status = styled.footer`
  ${row}
  position: relative;
  height: 15px;
  padding: 0 5px;
  gap: 7px;
  border-top: 1px solid #e4e5e6;
  background-color: #f5f5f6;
  font-size: 7px;
`;

const StatusText = styled.span`
  ${row}
`;

const ViewTools = styled.div`
  ${row}
  margin-left: auto;

  button {
    height: 12px;
  }
`;

const ZoomTools = styled.div`
  ${row}
  margin-left: 6px;
`;

const ZoomSlider = styled.input`
  appearance: none;
  width: 78px;
  height: 1px;
  background-color: #888;

  &::-webkit-slider-thumb {
    appearance: none;
    width: 7px;
    height: 7px;
    border: 1px solid #777;
    border-radius: 50%;
    background-color: #fff;
  }
`;

const ImeBar = styled.div`
  ${row}
  position: absolute;
  left: 60%;
  top: -1px;
  height: 16px;

  div {
    ${row}
    height: 15px;
    padding: 0 3px;
    gap: 4px;
    border: 1px solid #dde1e6;
    background-color: #fff;
    color: #1f6fc4;
    font-size: 9px;
  }
`;

const Tasks = styled.nav`
  ${row}
  align-items: stretch;
  height: 21px;
  padding: 0 8px 0 0;
  background-color: #1a1310;
  color: #e6e6e6;
  font-size: 7px;
`;

const Launch = styled.button`
  ${row}
  justify-content: center;
  width: 26px;
`;

const Task = styled.button`
  ${row}
  width: 82px;
  margin-left: 3px;
  padding-left: 4px;
  gap: 3px;
  border-bottom: 1px solid #76a9d8;
  background-color: ${(props) => (props.$on ? "#423a39" : "transparent")};
`;

const Tray = styled.div`
  ${row}
  margin-left: auto;
  gap: 4px;
`;

const Clock = styled.time`
  display: flex;
  flex-direction: column;
  align-items: center;
  width: 42px;
  line-height: 9px;
`;

const Corner = styled.i`
  position: absolute;
  width: 64px;
  height: 64px;
  pointer-events: none;
  border: 0 solid #1fe07a;
  ${(props) => (props.$top ? "top: 0; border-top-width: 3px;" : "bottom: 0; border-bottom-width: 3px;")}
  ${(props) => (props.$left ? "left: 0; border-left-width: 3px;" : "right: 0; border-right-width: 3px;")}
`;

const MeetingPill = styled.div`
  ${row}
  position: absolute;
  left: 467px;
  top: 0;
  width: 90px;
  height: 11px;
  padding: 0 4px;
  gap: 3px;
  border-radius: 0 0 2px 2px;
  background-color: #686868;
  color: #ddd;
`;

const Dot = styled.i`
  width: 4px;
  height: 4px;
  border-radius: 50%;
  background-color: ${(props) => props.$color};
`;

const Speaker = styled.section`
  position: absolute;
  right: 19px;
  top: 90px;
  width: 130px;
  height: 94px;
  border: 1px solid #1b1d1f;
  background-color: #2a2e2f;
  color: #eee;
  display: flex;
  flex-direction: column;

  header {
    ${row}
    height: 19px;
    padding-left: 5px;
    gap: 9px;
    border-bottom: 1px solid #17191a;
    background-color: #303338;
    font-size: 7px;
  }

  div {
    margin: 12px auto 0;
  }

  footer {
    ${row}
    width: 78px;
    height: 12px;
    margin-top: auto;
    gap: 2px;
    padding-left: 1px;
    background-color: #111;
    font-family: Roboto, sans-serif;
    font-size: 9px;
  }

  footer svg {
    width: 12px;
    height: 12px;
  }

  footer svg + svg {
    width: 8px;
    height: 9px;
  }
`;

const Avatar = styled.span`
  display: flex;
  align-items: center;
  justify-content: center;
  width: ${(props) => props.$size}px;
  height: ${(props) => props.$size}px;
  border-radius: 50%;
  background-color: #0b74f6;
  color: #fff;
  font-family: Roboto, sans-serif;
  font-size: ${(props) => props.$font}px;
`;

const Carrier = styled.span`
  position: absolute;
  left: 89px;
  top: 22px;
  color: #eee;
  font-size: 18px;
  line-height: 24px;
`;

const Recording = styled.div`
  ${row}
  position: absolute;
  z-index: 1;
  left: 47px;
  top: 178px;
  gap: 15px;
  color: #fff;
  font-size: 19px;
  line-height: 24px;
  text-shadow: 0 0 2px #555;
`;

const Floating = styled.section`
  position: absolute;
  right: 19px;
  top: 19px;
  width: 128px;
  height: 128px;
  display: flex;
  align-items: center;
  justify-content: center;
  background-color: #454545;
  color: #fff;

  &::after {
    content: "";
    position: absolute;
    inset: 60% 0 0;
    background: linear-gradient(transparent, #111);
  }
`;

const PhoneStatus = styled.div`
  ${row}
  position: absolute;
  z-index: 1;
  inset: 4px 4px auto 0;
  gap: 5px;
  color: #eee;
  font-family: Roboto, sans-serif;
  font-size: 20px;
  line-height: 22px;

  span:last-child {
    margin-left: auto;
  }
`;

const Battery = styled.span`
  position: relative;
  width: 29px;
  border: 2px solid #ddd;
  border-radius: 4px;
  background-color: #777;
  font-size: 13px;
  line-height: 13px;
  text-align: center;

  &::after {
    content: "";
    position: absolute;
    right: -6px;
    top: 2px;
    width: 2px;
    height: 9px;
    background-color: #ddd;
  }
`;

const Caller = styled.div`
  ${row}
  position: absolute;
  z-index: 1;
  inset: auto 0 5px;
  gap: 4px;
  font-family: Roboto, sans-serif;
  font-size: 20px;
  line-height: 24px;

  svg {
    width: 22px;
    height: 23px;
  }

  svg + svg {
    width: 20px;
  }
`;
